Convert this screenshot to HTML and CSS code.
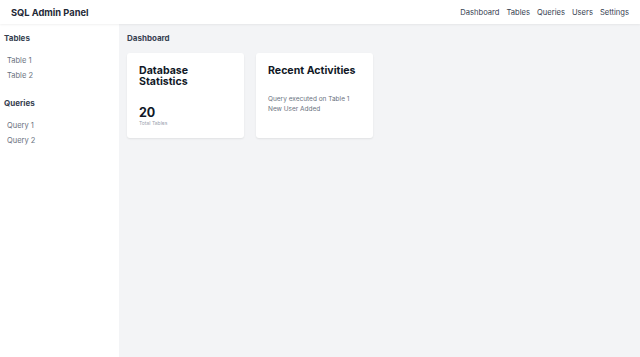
FILE: index.html
```html
<!DOCTYPE html>
<html lang="en">
<head>
  <meta charset="UTF-8">
  <meta name="viewport" content="width=device-width, initial-scale=1.0">
  <title>SQL Admin Panel</title>
  <link rel="stylesheet" href="styles.css">
</head>
<body>
  <header class="topbar">
    <span class="brand">SQL Admin Panel</span>
    <nav class="nav">
      <a href="#">Dashboard</a>
      <a href="#">Tables</a>
      <a href="#">Queries</a>
      <a href="#">Users</a>
      <a href="#">Settings</a>
    </nav>
  </header>

  <div class="layout">
    <aside class="sidebar">
      <div class="side-group">
        <h3>Tables</h3>
        <ul>
          <li>Table 1</li>
          <li>Table 2</li>
        </ul>
      </div>
      <div class="side-group">
        <h3>Queries</h3>
        <ul>
          <li>Query 1</li>
          <li>Query 2</li>
        </ul>
      </div>
    </aside>

    <main class="main">
      <h2>Dashboard</h2>
      <div class="cards">
        <div class="card">
          <h4>Database Statistics</h4>
          <div class="stat">20</div>
          <div class="stat-label">Total Tables</div>
        </div>
        <div class="card">
          <h4>Recent Activities</h4>
          <ul class="activity">
            <li>Query executed on Table 1</li>
            <li>New User Added</li>
          </ul>
        </div>
      </div>
    </main>
  </div>
</body>
</html>
```

FILE: styles.css
```css
body, html {
  margin: 0;
  height: 100%;
  font-family: Inter, "Noto Sans", sans-serif;
  color: #111827;
}
.topbar {
  display: flex;
  align-items: center;
  justify-content: space-between;
  height: 24px;
  padding: 0 11px;
  background: #fff;
  box-shadow: 0 1px 2px rgba(0, 0, 0, 0.06);
  position: relative;
}
.brand {
  font-weight: 700;
  font-size: 9.3px;
  color: #1f2937;
}
.nav {
  display: flex;
  gap: 7px;
}
.nav a {
  color: #374151;
  text-decoration: none;
  font-size: 7.6px;
}
.layout {
  display: flex;
  height: calc(100% - 24px);
}
.sidebar {
  width: 119px;
  background: #fff;
  padding: 9px 4px;
  box-sizing: border-box;
}
.side-group {
  margin-bottom: 12px;
}
.side-group h3 {
  margin: 0 0 13px;
  font-size: 8px;
  font-weight: 700;
  color: #374151;
}
.side-group ul {
  list-style: none;
  margin: 0;
  padding: 0 0 0 3px;
}
.side-group li {
  font-size: 7.5px;
  color: #6b7280;
  height: 15px;
}
.main {
  flex: 1;
  background: #f3f4f6;
  padding: 9px 8px;
}
.main h2 {
  margin: 0 0 10px;
  font-size: 8px;
  font-weight: 700;
  color: #374151;
}
.cards {
  display: flex;
  gap: 12px;
}
.card {
  width: 117px;
  height: 85px;
  box-sizing: border-box;
  background: #fff;
  border-radius: 3px;
  box-shadow: 0 1px 2px rgba(0, 0, 0, 0.08);
  padding: 12px 12px;
}
.card h4 {
  margin: 0;
  font-size: 10.6px;
  line-height: 11px;
  font-weight: 700;
  color: #111827;
}
.stat {
  margin-top: 19px;
  font-size: 12.5px;
  font-weight: 700;
  line-height: 14px;
}
.stat-label {
  font-size: 5px;
  color: #9ca3af;
}
.activity {
  list-style: none;
  margin: 18px 0 0;
  padding: 0;
}
.activity li {
  font-size: 6.5px;
  color: #6b7280;
  line-height: 10px;
}
```
